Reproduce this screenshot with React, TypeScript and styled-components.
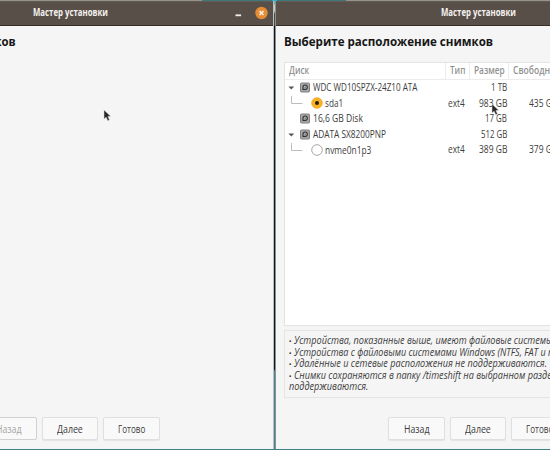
import React, { useLayoutEffect, useRef, useState } from "react";
import styled, { createGlobalStyle } from "styled-components";

const Global = createGlobalStyle`
  * { box-sizing: border-box; }
  body { margin: 0; overflow: hidden; }
`;

const Desktop = styled.div`
  position: relative;
  width: 550px;
  height: 450px;
  overflow: hidden;
  display: flex;
  flex-direction: column;
  background: #3f7f86;
  font-family: "Open Sans", "Noto Sans", sans-serif;
  font-size: 10px;
  color: #3c3c3c;
`;

const TopEdge = styled.div`
  height: 1px;
  flex: none;
  background: linear-gradient(90deg, #96938d 334px, #40777b 334px 404px, #2fb0c4 404px 409px, #40777b 409px 478px, #96938d 478px);
  background-position: -132px 0;
  background-size: 682px 1px;
`;

const Windows = styled.div`
  display: flex;
  height: 448px;
  margin-left: -132px;
`;

const Window = styled.section<{ $w: number }>`
  flex: none;
  width: ${(p) => p.$w}px;
  display: flex;
  flex-direction: column;
  background: #f5f5f5;
`;

const Gap = styled.div`
  flex: none;
  width: 3px;
  border-left: 1px solid #b9bfc0;
  border-right: 1px solid #8b9193;
  background: linear-gradient(#58b8c4 3px, #c9c9c4 4px 10px, #4a4542 13px 24px, #101214 26px 368px, #3f8990 370px);
`;

const TitleBar = styled.header`
  position: relative;
  flex: none;
  height: 25px;
  display: flex;
  align-items: center;
  justify-content: center;
  padding-bottom: 2px;
  background: #594f49;
  border-top: 1px solid #655b55;
  border-bottom: 1px solid #352d28;
  color: #f4f1ee;
  font-weight: 700;
  font-size: 9.8px;
`;

const Controls = styled.div`
  position: absolute;
  right: 5px;
  top: 3px;
  display: flex;
  gap: 13px;
`;

const Body = styled.div`
  flex: 1;
  display: flex;
  flex-direction: column;
  padding: 7px 8px 9px;
`;

const Heading = styled.h1`
  margin: 0 0 13px;
  height: 16px;
  line-height: 16px;
  font-size: 13px;
  font-weight: 700;
  color: #171717;
`;

const FitBox = styled.span<{ $w: number }>`
  display: inline-block;
  width: ${(p) => p.$w}px;
  white-space: pre;
  vertical-align: top;
`;

const FitInner = styled.span`
  display: inline-block;
  transform-origin: 0 50%;
`;

/* Condenses a line of text to the given width. */
function Fit({ w, children }: { w: number; children: string }) {
  const ref = useRef<HTMLSpanElement>(null);
  const [scale, setScale] = useState(1);
  useLayoutEffect(() => {
    if (ref.current) setScale(w / ref.current.offsetWidth);
  }, [w, children]);
  return (
    <FitBox $w={w}>
      <FitInner ref={ref} style={{ transform: `scaleX(${scale})` }}>
        {children}
      </FitInner>
    </FitBox>
  );
}

const Table = styled.div`
  flex: none;
  height: 264px;
  background: #fff;
  border: 1px solid #e3e3e3;
`;

const HeaderRow = styled.div`
  display: grid;
  grid-template-columns: 161px 24px 39px 48px 1fr;
  height: 17px;
  line-height: 16px;
  border-bottom: 1px solid #ececec;
  color: #929292;
  font-weight: 600;
  font-size: 9.8px;
`;

const HeadCell = styled.div`
  padding-left: 3.5px;
  border-right: 1px solid #ececec;
  white-space: nowrap;
`;

const Row = styled.div`
  display: grid;
  grid-template-columns: 161px 24px 36.5px 50px 1fr;
  height: 15.6px;
  line-height: 15px;
`;

const Tree = styled.div`
  display: flex;
  align-items: center;
`;

const Marker = styled.span<{ $w: number }>`
  flex: none;
  display: flex;
  width: ${(p) => p.$w}px;
  height: 15px;
  align-items: center;
`;

const Cell = styled.div<{ $right?: boolean }>`
  text-align: ${(p) => (p.$right ? "right" : "left")};
  padding-left: ${(p) => (p.$right ? 0 : 2)}px;
`;

const Note = styled.div`
  flex: none;
  margin-top: 4px;
  height: 68px;
  border: 1px solid #e5e5e5;
  padding: 4px 0 0 3.5px;
  font-style: italic;
  font-size: 10px;
  line-height: 11.6px;
  overflow: hidden;
`;

const NoteLine = styled.div`
  display: flex;
  height: 11.6px;
`;

const Bullet = styled.span`
  width: 5px;
  font-size: 8px;
`;

const Buttons = styled.footer`
  margin: auto 0 0 104px;
  display: flex;
  gap: 5px;
`;

const Button = styled.button<{ $off?: boolean }>`
  width: 56.5px;
  height: 23px;
  padding: 0;
  display: flex;
  align-items: center;
  justify-content: center;
  font: inherit;
  line-height: 20px;
  color: ${(p) => (p.$off ? "#a4a4a4" : "#3b3b3b")};
  background: #f9f9f9;
  border: 1px solid ${(p) => (p.$off ? "#d3d1cf" : "#e0dfdf")};
  border-radius: 2px;
  box-shadow: ${(p) => (p.$off ? "none" : "0 1px 1px #e4e4e4")};
`;

const Pointer = styled.svg<{ $x: number; $y: number }>`
  position: absolute;
  left: ${(p) => p.$x}px;
  top: ${(p) => p.$y}px;
`;

const Cursor = ({ x, y }: { x: number; y: number }) => (
  <Pointer $x={x} $y={y} width="10" height="14" viewBox="0 0 10 14">
    <path d="M1 1 L1 10 L3.1 8.2 L4.8 11.8 L6.5 11 L4.9 7.6 L7.6 7.2 Z" fill="#292929" stroke="#d8d8d8" strokeWidth=".5" />
  </Pointer>
);

const MinIcon = () => (
  <svg width="7" height="15" viewBox="0 0 7 15">
    <rect x=".5" y="9.4" width="5.6" height="1.8" fill="#f2eeea" />
  </svg>
);

const CloseIcon = () => (
  <svg width="13" height="15" viewBox="0 0 13 15">
    <circle cx="6.5" cy="8" r="6.2" fill="#e58d35" />
    <path d="M4.5 6 L8.5 10 M8.5 6 L4.5 10" stroke="#fff2e2" strokeWidth="1.6" />
  </svg>
);

const Arrow = () => (
  <svg width="15" height="15" viewBox="0 0 15 15">
    <path d="M3.4 6.5 H9.2 L6.3 9.5 Z" fill="#555" />
  </svg>
);

const Branch = () => (
  <svg width="24" height="15" viewBox="0 0 24 15">
    <path d="M6.5 0 V7.5 H17.5" fill="none" stroke="#bdbdbd" />
  </svg>
);

const Drive = () => (
  <svg width="10" height="11" viewBox="0 0 10 11">
    <rect x=".5" y="1" width="9" height="9" rx="1" fill="#a6a6a6" stroke="#808080" />
    <path d="M3 8 V5.3 Q3 3 5.2 3 Q7.3 3 7.3 5.2 Q7.3 7.4 5.2 7.4 H3" fill="#bdbdbd" stroke="#303030" strokeWidth="1.1" />
    <circle cx="5.2" cy="5.2" r=".6" fill="#444" />
  </svg>
);

const Radio = ({ on }: { on?: boolean }) => (
  <svg width="12" height="12" viewBox="0 0 12 12">
    <circle cx="6" cy="6" r="5.3" fill={on ? "#f8b323" : "#fff"} stroke={on ? "#eda51b" : "#929292"} strokeWidth=".8" />
    {on && <circle cx="6" cy="6" r="2" fill="#241c10" />}
  </svg>
);

type Disk = { name: string; w: number; size: string; sw: number; parent?: boolean; part?: boolean; on?: boolean; free?: string };

const disks: Disk[] = [
  { name: "WDC WD10SPZX-24Z10 ATA", w: 104.5, size: "1 TB", sw: 16, parent: true },
  { name: "sda1", w: 18, size: "983 GB", sw: 28, part: true, on: true, free: "435 GB" },
  { name: "16,6 GB Disk", w: 49.5, size: "17 GB", sw: 22 },
  { name: "ADATA SX8200PNP", w: 73, size: "512 GB", sw: 26, parent: true },
  { name: "nvme0n1p3", w: 46, size: "389 GB", sw: 28, part: true, free: "379 GB" },
];

const notes: { text: string; w: number; bullet?: boolean }[] = [
  { text: "Устройства, показанные выше, имеют файловые системы", w: 258.5, bullet: true },
  { text: "Устройства с файловыми системами Windows (NTFS, FAT и п", w: 259.5, bullet: true },
  { text: "Удалённые и сетевые расположения не поддерживаются.", w: 253, bullet: true },
  { text: "Снимки сохраняются в папку /timeshift на выбранном разде", w: 257.5, bullet: true },
  { text: "поддерживаются.", w: 79 },
];

const Footer = ({ first }: { first?: boolean }) => (
  <Buttons>
    <Button $off={first}><Fit w={25.5}>Назад</Fit></Button>
    <Button><Fit w={25.5}>Далее</Fit></Button>
    <Button><Fit w={27.5}>Готово</Fit></Button>
  </Buttons>
);

const Title = () => (
  <TitleBar>
    <Fit w={75}>Мастер установки</Fit>
    <Controls>
      <MinIcon />
      <CloseIcon />
    </Controls>
  </TitleBar>
);

export default function App() {
  return (
    <Desktop>
      <Global />
      <TopEdge />
      <Windows>
        <Window $w={405}>
          <Title />
          <Body>
            <Heading><Fit w={140}>Выберите тип снимков</Fit></Heading>
            <Footer first />
          </Body>
        </Window>
        <Gap />
        <Window $w={404}>
          <Title />
          <Body>
            <Heading><Fit w={209}>Выберите расположение снимков</Fit></Heading>
            <Table>
              <HeaderRow>
                <HeadCell><Fit w={20}>Диск</Fit></HeadCell>
                <HeadCell><Fit w={15}>Тип</Fit></HeadCell>
                <HeadCell><Fit w={30.5}>Размер</Fit></HeadCell>
                <HeadCell><Fit w={42}>Свободно</Fit></HeadCell>
                <HeadCell />
              </HeaderRow>
              {disks.map((d) => (
                <Row key={d.name}>
                  <Tree>
                    <Marker $w={d.part ? 26 : 15}>{d.part ? <Branch /> : d.parent ? <Arrow /> : null}</Marker>
                    <Marker $w={d.part ? 14 : 12.5}>{d.part ? <Radio on={d.on} /> : <Drive />}</Marker>
                    <Fit w={d.w}>{d.name}</Fit>
                  </Tree>
                  <Cell>{d.part && <Fit w={16.5}>ext4</Fit>}</Cell>
                  <Cell $right><Fit w={d.sw}>{d.size}</Fit></Cell>
                  <Cell $right>{d.free && <Fit w={28}>{d.free}</Fit>}</Cell>
                </Row>
              ))}
            </Table>
            <Note>
              {notes.map((n) => (
                <NoteLine key={n.text}>
                  {n.bullet && <Bullet>•</Bullet>}
                  <Fit w={n.w}>{n.text}</Fit>
                </NoteLine>
              ))}
            </Note>
            <Footer />
          </Body>
        </Window>
      </Windows>
      <Cursor x={103} y={109} />
      <Cursor x={491} y={103} />
    </Desktop>
  );
}
